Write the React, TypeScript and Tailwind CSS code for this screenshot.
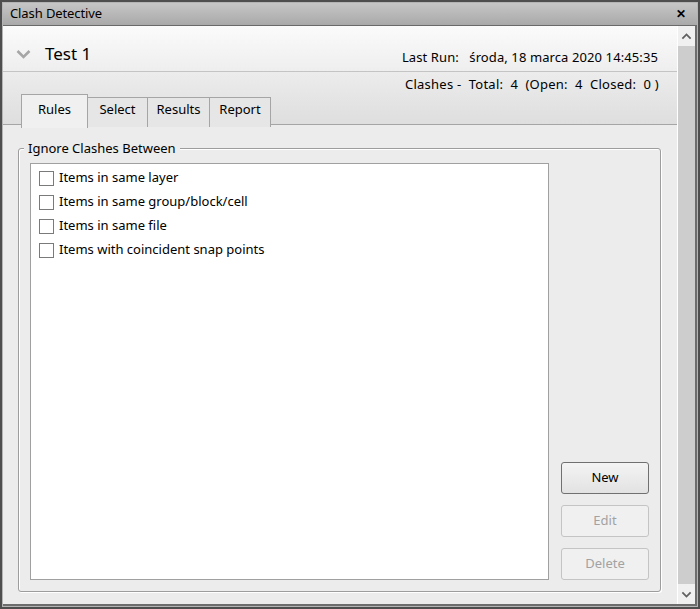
import React from "react";

const rules = [
  "Items in same layer",
  "Items in same group/block/cell",
  "Items in same file",
  "Items with coincident snap points",
];

const tabs = [
  { label: "Rules", w: "w-[67px]" },
  { label: "Select", w: "w-[61px]" },
  { label: "Results", w: "w-[63px]" },
  { label: "Report", w: "w-[62px]" },
];

function Chevron({ up, className }: { up?: boolean; className?: string }) {
  return (
    <svg viewBox="0 0 16 10" className={className} fill="none">
      <path
        d={up ? "M2 8 L8 2 L14 8" : "M2 2 L8 8 L14 2"}
        stroke="currentColor"
        strokeWidth="2.6"
        strokeLinejoin="miter"
      />
    </svg>
  );
}

export default function App() {
  return (
    <div
      className="w-[700px] h-[609px] bg-[#4e4e4e] p-[2px] text-[13px] text-black"
      style={{ fontFamily: '"Noto Sans", "Open Sans", sans-serif' }}
    >
      <div className="flex h-full flex-col border border-[#b4b4b4]">
        {/* title bar */}
        <div className="flex h-[23px] shrink-0 items-center justify-between border-b border-[#6a6a6a] bg-gradient-to-b from-[#c6c6c6] to-[#a9a9a9] pl-[7px] pr-[11px]">
          <span className="text-[13px] tracking-[-0.1px]">Clash Detective</span>
          <span className="text-[12px] font-bold leading-none">✕</span>
        </div>

        <div className="flex min-h-0 flex-1 border-b-2 border-[#6d6d6d]">
          {/* main content */}
          <div className="flex flex-1 flex-col bg-[#ececec]">
            {/* header */}
            <div className="flex h-[46px] shrink-0 items-end justify-between border-b border-[#c4c4c4] bg-gradient-to-b from-[#fbfbfb] to-[#eeeeee] pb-[4px] pl-[12px] pr-[19px]">
              <div className="flex items-center gap-[13px] pb-[1px]">
                <Chevron className="h-[10px] w-[17px] text-[#a6a6a6]" />
                <span className="text-[17px] leading-[24px]">Test 1</span>
              </div>
              <span className="leading-[20px] tracking-[0.1px]">
                Last Run:&nbsp;&nbsp;&nbsp;środa, 18 marca 2020 14:45:35
              </span>
            </div>

            {/* summary + tabs */}
            <div className="flex h-[53px] shrink-0 flex-col border-b border-[#a5a5a5] bg-gradient-to-b from-[#ececec] to-[#dedede]">
              <div className="flex justify-end pr-[18px] pt-[2px] leading-[20px] tracking-[0.25px]">
                Clashes -&nbsp;&nbsp;Total:&nbsp;&nbsp;4&nbsp;&nbsp;(Open:&nbsp;&nbsp;4&nbsp;&nbsp;Closed:&nbsp;&nbsp;0 )
              </div>
              <div className="mt-auto flex items-end pl-[18px]">
                {tabs.map((t, i) =>
                  i === 0 ? (
                    <div
                      key={t.label}
                      className={`${t.w} relative z-10 -mb-px flex h-[34px] items-center justify-center border border-b-0 border-[#a5a5a5] bg-[#f0f0f0] pb-[3px]`}
                    >
                      {t.label}
                    </div>
                  ) : (
                    <div
                      key={t.label}
                      className={`${t.w} -ml-px flex h-[30px] items-center justify-center border border-b-0 border-[#a5a5a5] bg-[#e6e6e6] pb-[5px]`}
                    >
                      {t.label}
                    </div>
                  )
                )}
              </div>
            </div>

            {/* rules panel */}
            <div className="flex flex-1 flex-col pb-[12px] pl-[15px] pr-[16px] pt-[23px]">
              <div className="relative flex flex-1 rounded-[3px] border border-[#9d9d9d] pb-[11px] pl-[11px] pr-[11px] pt-[14px] shadow-[inset_1px_1px_0_#ffffff,1px_1px_0_#ffffff]">
                <span className="absolute -top-[11px] left-[5px] bg-[#ececec] px-[4px] leading-[20px]">
                  Ignore Clashes Between
                </span>
                <div className="flex-1 border border-[#a0a0a0] bg-white pl-[8px] pt-[2px]">
                  {rules.map((r) => (
                    <div key={r} className="flex h-[24px] items-center gap-[5px]">
                      <span className="h-[15px] w-[15px] border border-[#7a7a7a] bg-white" />
                      <span>{r}</span>
                    </div>
                  ))}
                </div>
                <div className="ml-[12px] flex w-[88px] flex-col justify-end gap-[11px]">
                  <div className="flex h-[32px] items-center justify-center rounded-[3px] border border-[#707070] bg-gradient-to-b from-[#f4f4f4] to-[#e2e2e2]">
                    New
                  </div>
                  <div className="flex h-[32px] items-center justify-center rounded-[3px] border border-[#c4c4c4] bg-[#f0f0f0] text-[#a2a2a2]">
                    Edit
                  </div>
                  <div className="flex h-[32px] items-center justify-center rounded-[3px] border border-[#c4c4c4] bg-[#f0f0f0] text-[#a2a2a2]">
                    Delete
                  </div>
                </div>
              </div>
            </div>
          </div>

          {/* scrollbar */}
          <div className="flex w-[20px] flex-col border-l border-r-2 border-white border-r-[#6d6d6d] bg-[#f0f0f0]">
            <div className="flex h-[20px] items-center justify-center">
              <Chevron up className="h-[7px] w-[11px] text-[#606060]" />
            </div>
            <div className="flex-1 bg-[#cdcdcd]" />
            <div className="flex h-[20px] items-center justify-center">
              <Chevron className="h-[7px] w-[11px] text-[#606060]" />
            </div>
          </div>
        </div>
      </div>
    </div>
  );
}
